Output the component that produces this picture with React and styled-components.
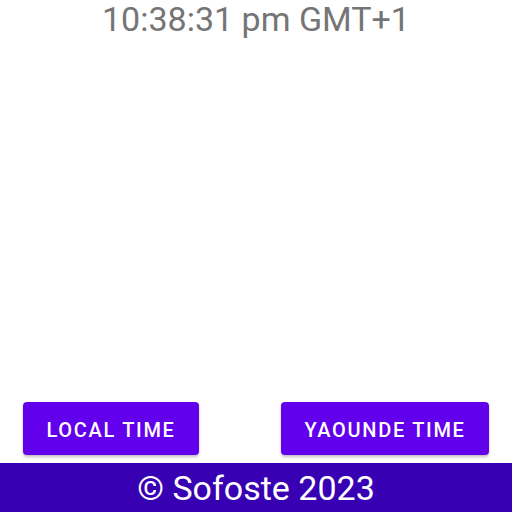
import styled, { createGlobalStyle } from 'styled-components'

const Global = createGlobalStyle`
  html, body { margin: 0; padding: 0; background: #fff; }
  body { font-family: Roboto, "Noto Sans", sans-serif; }
`

const Screen = styled.div`
  display: flex;
  flex-direction: column;
  height: 100vh;
  width: 100vw;
  overflow: hidden;
`

const Clock = styled.div`
  text-align: center;
  font-size: 34px;
  color: #757575;
  line-height: 38px;
`

const Spacer = styled.div`
  flex: 1;
`

const ButtonRow = styled.div`
  display: flex;
  justify-content: space-between;
  padding: 0 23px 8px;
`

const Button = styled.button`
  width: ${p => p.w}px;
  height: 53px;
  background: #6200ee;
  color: #fff;
  border: none;
  border-radius: 4px;
  font-family: Roboto, sans-serif;
  font-weight: 500;
  font-size: 20px;
  letter-spacing: 1.7px;
  box-shadow: 0 2px 3px rgba(0, 0, 0, 0.25);
  padding: 3px 0 0;
`

const Footer = styled.div`
  height: 49px;
  background: #3700b3;
  color: #fff;
  font-size: 34px;
  display: flex;
  align-items: center;
  justify-content: center;
`

export default function App() {
  return (
    <Screen>
      <Global />
      <Clock>10:38:31 pm GMT+1</Clock>
      <Spacer />
      <ButtonRow>
        <Button w={176}>LOCAL TIME</Button>
        <Button w={208}>YAOUNDE TIME</Button>
      </ButtonRow>
      <Footer>© Sofoste 2023</Footer>
    </Screen>
  )
}
